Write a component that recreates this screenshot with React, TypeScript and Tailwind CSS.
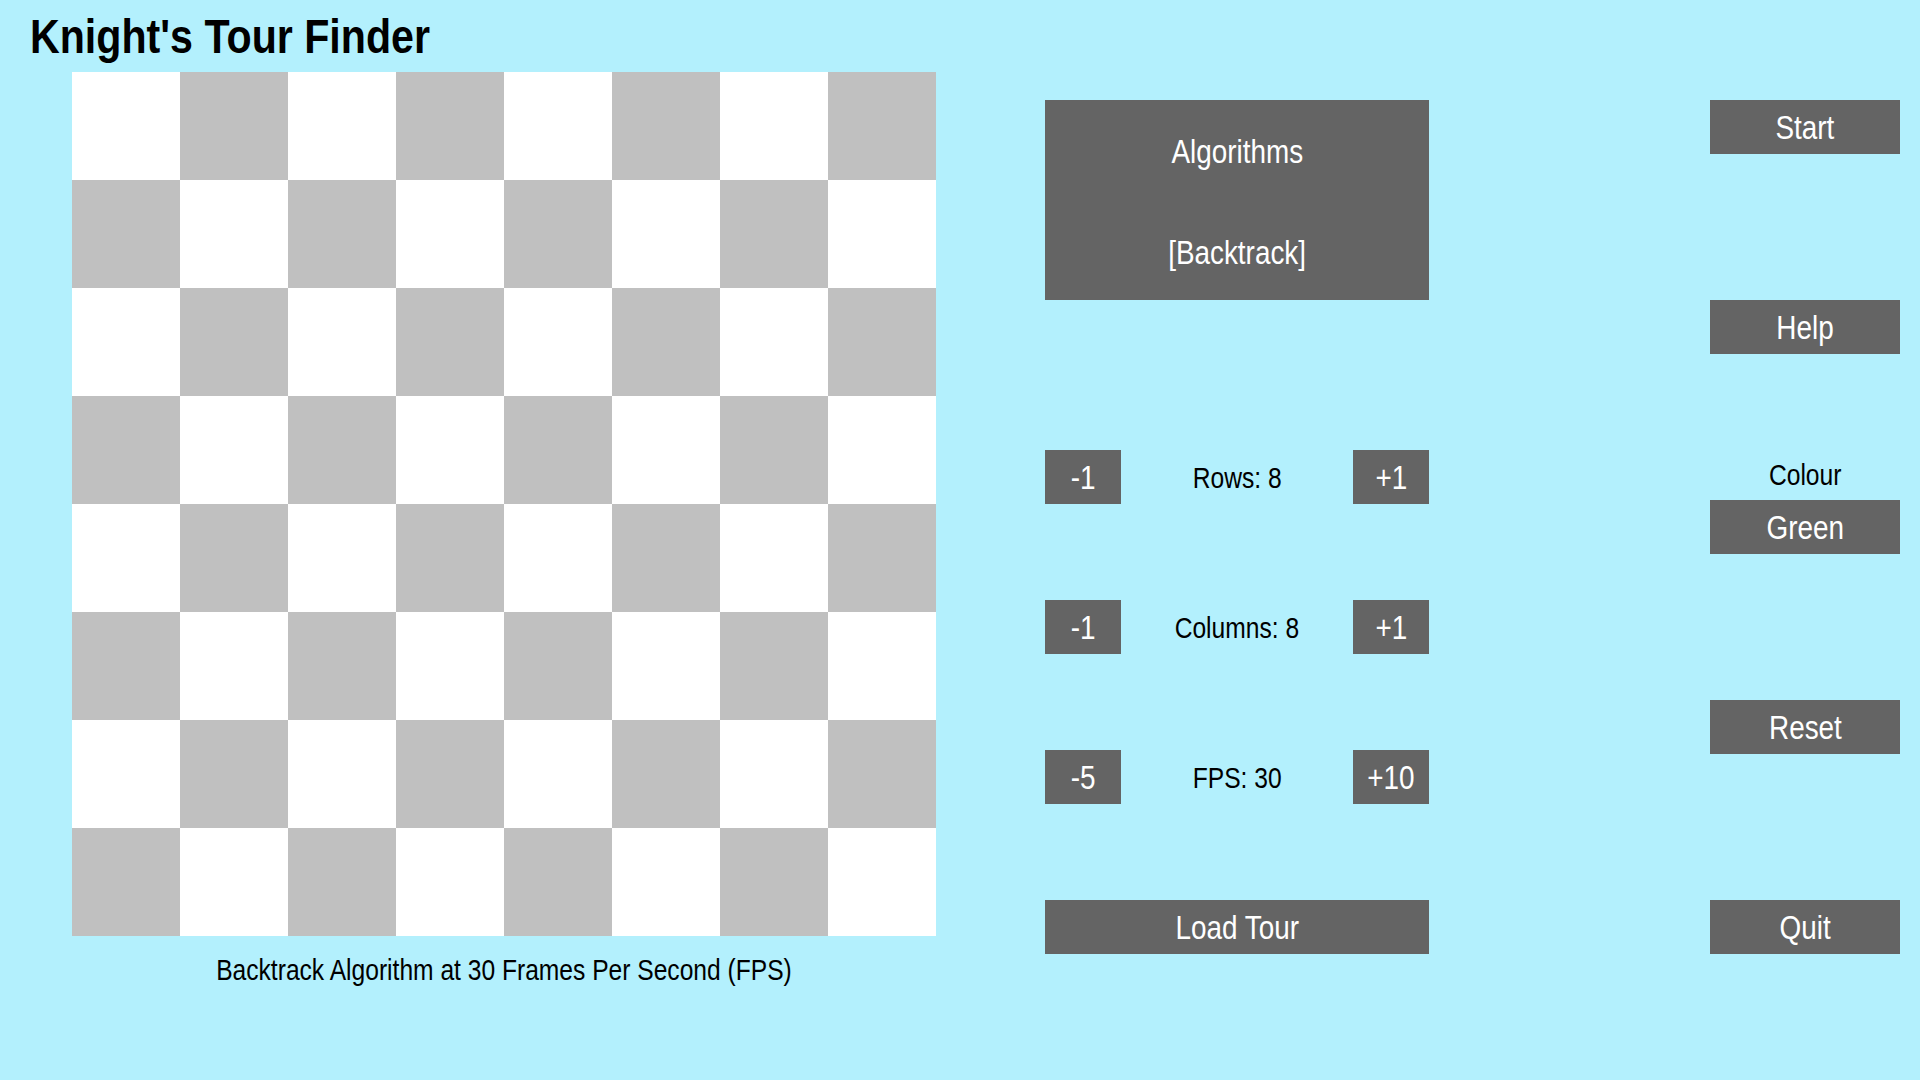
import React from 'react';

const ROWS = 8;
const COLS = 8;

// the app's font is a narrow sans; squeeze Liberation Sans to match
const Narrow: React.FC<{ children: React.ReactNode; className?: string }> = ({ children, className = 'scale-x-[0.82]' }) => (
  <span className={`inline-block whitespace-nowrap ${className}`}>{children}</span>
);

const Button: React.FC<{ label: string; className?: string }> = ({ label, className = '' }) => (
  <button className={`h-[54px] bg-[#646464] text-white text-[34px] leading-none flex items-center justify-center ${className}`}>
    <Narrow>{label}</Narrow>
  </button>
);

const Stepper: React.FC<{ minus: string; plus: string; label: string }> = ({ minus, plus, label }) => (
  <div className="flex items-center justify-between">
    <Button label={minus} className="w-[76px]" />
    <span className="text-[30px] leading-none text-black pt-[2px]">
      <Narrow>{label}</Narrow>
    </span>
    <Button label={plus} className="w-[76px]" />
  </div>
);

const App: React.FC = () => {
  const cells = [];
  for (let r = 0; r < ROWS; r++) {
    for (let c = 0; c < COLS; c++) {
      const dark = (r + c) % 2 === 1;
      cells.push(<div key={`${r}-${c}`} className={dark ? 'bg-[#c0c0c0]' : 'bg-white'} />);
    }
  }

  return (
    <div
      className="w-[1920px] h-[1080px] bg-[#b3f0fd] overflow-hidden flex flex-col"
      style={{ fontFamily: "'Liberation Sans', Arial, sans-serif" }}
    >
      {/* Title */}
      <div className="h-[72px] pl-[30px] pt-[12px]">
        <h1 className="text-[49px] leading-none font-bold text-black">
          <Narrow className="origin-left scale-x-[0.84]">Knight's Tour Finder</Narrow>
        </h1>
      </div>

      <div className="flex">
        {/* Board + caption */}
        <div className="ml-[72px] w-[864px] flex flex-col">
          <div className="w-[864px] h-[864px] grid grid-cols-8 grid-rows-8">{cells}</div>
          <p className="mt-[19px] text-center text-[30px] leading-none text-black">
            <Narrow>Backtrack Algorithm at 30 Frames Per Second (FPS)</Narrow>
          </p>
        </div>

        {/* Settings */}
        <div className="ml-[109px] mt-[28px] w-[384px] flex flex-col">
          <div className="h-[200px] bg-[#646464] text-white text-[34px] leading-none flex flex-col">
            <div className="flex-1 flex items-center justify-center pt-[2px]">
              <Narrow>Algorithms</Narrow>
            </div>
            <div className="flex-1 flex items-center justify-center pt-[4px]">
              <Narrow>[Backtrack]</Narrow>
            </div>
          </div>
          <div className="mt-[150px] flex flex-col gap-[96px]">
            <Stepper minus="-1" plus="+1" label="Rows: 8" />
            <Stepper minus="-1" plus="+1" label="Columns: 8" />
            <Stepper minus="-5" plus="+10" label="FPS: 30" />
            <Button label="Load Tour" className="w-full" />
          </div>
        </div>

        {/* Actions */}
        <div className="ml-[281px] mt-[28px] w-[190px] flex flex-col">
          <Button label="Start" />
          <Button label="Help" className="mt-[146px]" />
          <div className="mt-[106px] h-[30px] text-[30px] leading-none text-black text-center">
            <Narrow>Colour</Narrow>
          </div>
          <Button label="Green" className="mt-[10px]" />
          <Button label="Reset" className="mt-[146px]" />
          <Button label="Quit" className="mt-[146px]" />
        </div>
      </div>
    </div>
  );
};

export default App;
